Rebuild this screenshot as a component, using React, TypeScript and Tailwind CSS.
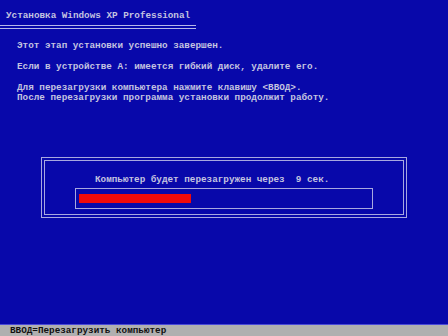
import React from 'react';

const App = () => {
  return (
    <div className="w-[448px] h-[336px] bg-[#0808aa] flex flex-col overflow-hidden font-['Liberation_Mono',monospace] text-[9.3px] leading-[10px] text-[#c4c4e0] font-bold whitespace-pre">
      {/* заголовок */}
      <div className="pt-[11px] pl-[6px]">Установка Windows XP Professional</div>
      <div className="mt-[4px] w-[196px] h-[4px] border-y border-[#b8b8e8]" />

      <div className="pl-[17px]">
        <div className="mt-[12px]">Этот этап установки успешно завершен.</div>
        <div className="mt-[11px]">Если в устройстве A: имеется гибкий диск, удалите его.</div>
        <div className="mt-[11px]">Для перезагрузки компьютера нажмите клавишу &lt;ВВОД&gt;.</div>
        <div>После перезагрузки программа установки продолжит работу.</div>
      </div>

      {/* окно с таймером */}
      <div className="mt-[54px] ml-[41px] w-[366px] h-[61px] border border-[#a8a8e0] p-[2px]">
        <div className="h-full border border-[#a8a8e0]">
          <div className="mt-[14px] pl-[50px]">Компьютер будет перезагружен через  9 сек.</div>
          <div className="mt-[3px] ml-[30px] w-[298px] h-[21px] border border-[#a8a8e0]">
            <div className="mt-[5px] ml-[3px] w-[112px] h-[9px] bg-[#f00a0a]" />
          </div>
        </div>
      </div>

      {/* строка состояния */}
      <div className="mt-auto border-t border-[#4a4ad8] h-[12px] bg-[#b0b0b0] text-[#111] pl-[10px] leading-[11px]">
        ВВОД=Перезагрузить компьютер
      </div>
    </div>
  );
};

export default App;
